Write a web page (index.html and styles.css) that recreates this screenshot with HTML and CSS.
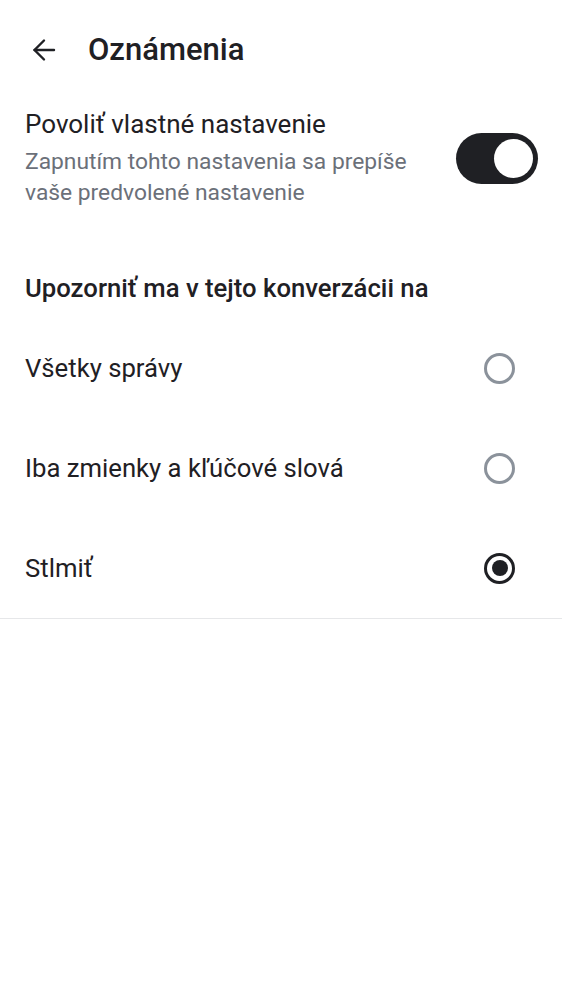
FILE: index.html
```html
<!DOCTYPE html>
<html lang="sk">
<head>
<meta charset="utf-8">
<link rel="stylesheet" href="styles.css">
</head>
<body>
<header class="topbar">
  <button class="back" aria-label="Späť">
    <svg width="24" height="24" viewBox="0 0 24 24" fill="none" stroke="#1f2024" stroke-width="2.4" stroke-linecap="round" stroke-linejoin="round">
      <path d="M22 12H2.5"/>
      <path d="M12 2.5L2.5 12L12 21.5"/>
    </svg>
  </button>
  <h1 class="title">Oznámenia</h1>
</header>

<section class="toggle-row">
  <div class="toggle-text">
    <div class="toggle-title">Povoliť vlastné nastavenie</div>
    <div class="toggle-sub">Zapnutím tohto nastavenia sa prepíše vaše predvolené nastavenie</div>
  </div>
  <div class="switch on"><span class="knob"></span></div>
</section>

<h2 class="section-title">Upozorniť ma v tejto konverzácii na</h2>

<ul class="options">
  <li class="option"><span class="label">Všetky správy</span><span class="radio"></span></li>
  <li class="option"><span class="label">Iba zmienky a kľúčové slová</span><span class="radio"></span></li>
  <li class="option"><span class="label">Stlmiť</span><span class="radio checked"></span></li>
</ul>
</body>
</html>
```

FILE: styles.css
```css
* { box-sizing: border-box; }
html, body { margin: 0; padding: 0; background: #fff; }
body {
  font-family: Roboto, "Noto Sans", "Liberation Sans", sans-serif;
  color: #1f2024;
}
.topbar {
  display: flex;
  align-items: center;
  height: 99px;
  padding-left: 30px;
}
.back {
  border: 0;
  background: none;
  padding: 0;
  width: 27px;
  height: 24px;
  display: flex;
  align-items: center;
  justify-content: center;
}
.title {
  margin: 0 0 0 31px;
  font-size: 31px;
  font-weight: 500;
  line-height: 38px;
}
.toggle-row {
  display: flex;
  align-items: center;
  justify-content: space-between;
  padding: 9px 25px 0 25px;
}
.toggle-text { width: 405px; }
.toggle-title {
  font-size: 26px;
  line-height: 32px;
}
.toggle-sub {
  margin-top: 6px;
  font-size: 22.8px;
  line-height: 31px;
  color: #6b7079;
}
.switch {
  width: 82px;
  height: 51px;
  border-radius: 26px;
  background: #1f2024;
  display: flex;
  align-items: center;
  justify-content: flex-end;
  padding-right: 5px;
  margin-right: -1px;
}
.knob {
  width: 39px;
  height: 39px;
  border-radius: 50%;
  background: #fff;
}
.section-title {
  margin: 64px 0 0 0;
  padding: 0 25px;
  font-size: 25.7px;
  font-weight: 500;
  line-height: 32px;
}
.options {
  list-style: none;
  margin: 14px 0 0 0;
  padding: 0;
  border-bottom: 1px solid #e6e7e9;
}
.option {
  display: flex;
  align-items: center;
  justify-content: space-between;
  height: 100px;
  padding: 0 47px 0 25px;
}
.label {
  font-size: 25.7px;
  line-height: 32px;
}
.radio {
  width: 31px;
  height: 31px;
  border-radius: 50%;
  border: 3px solid #8b929b;
  display: flex;
  align-items: center;
  justify-content: center;
}
.radio.checked {
  border: 3.5px solid #1f2024;
}
.radio.checked::after {
  content: "";
  width: 16px;
  height: 16px;
  border-radius: 50%;
  background: #1f2024;
}
```
